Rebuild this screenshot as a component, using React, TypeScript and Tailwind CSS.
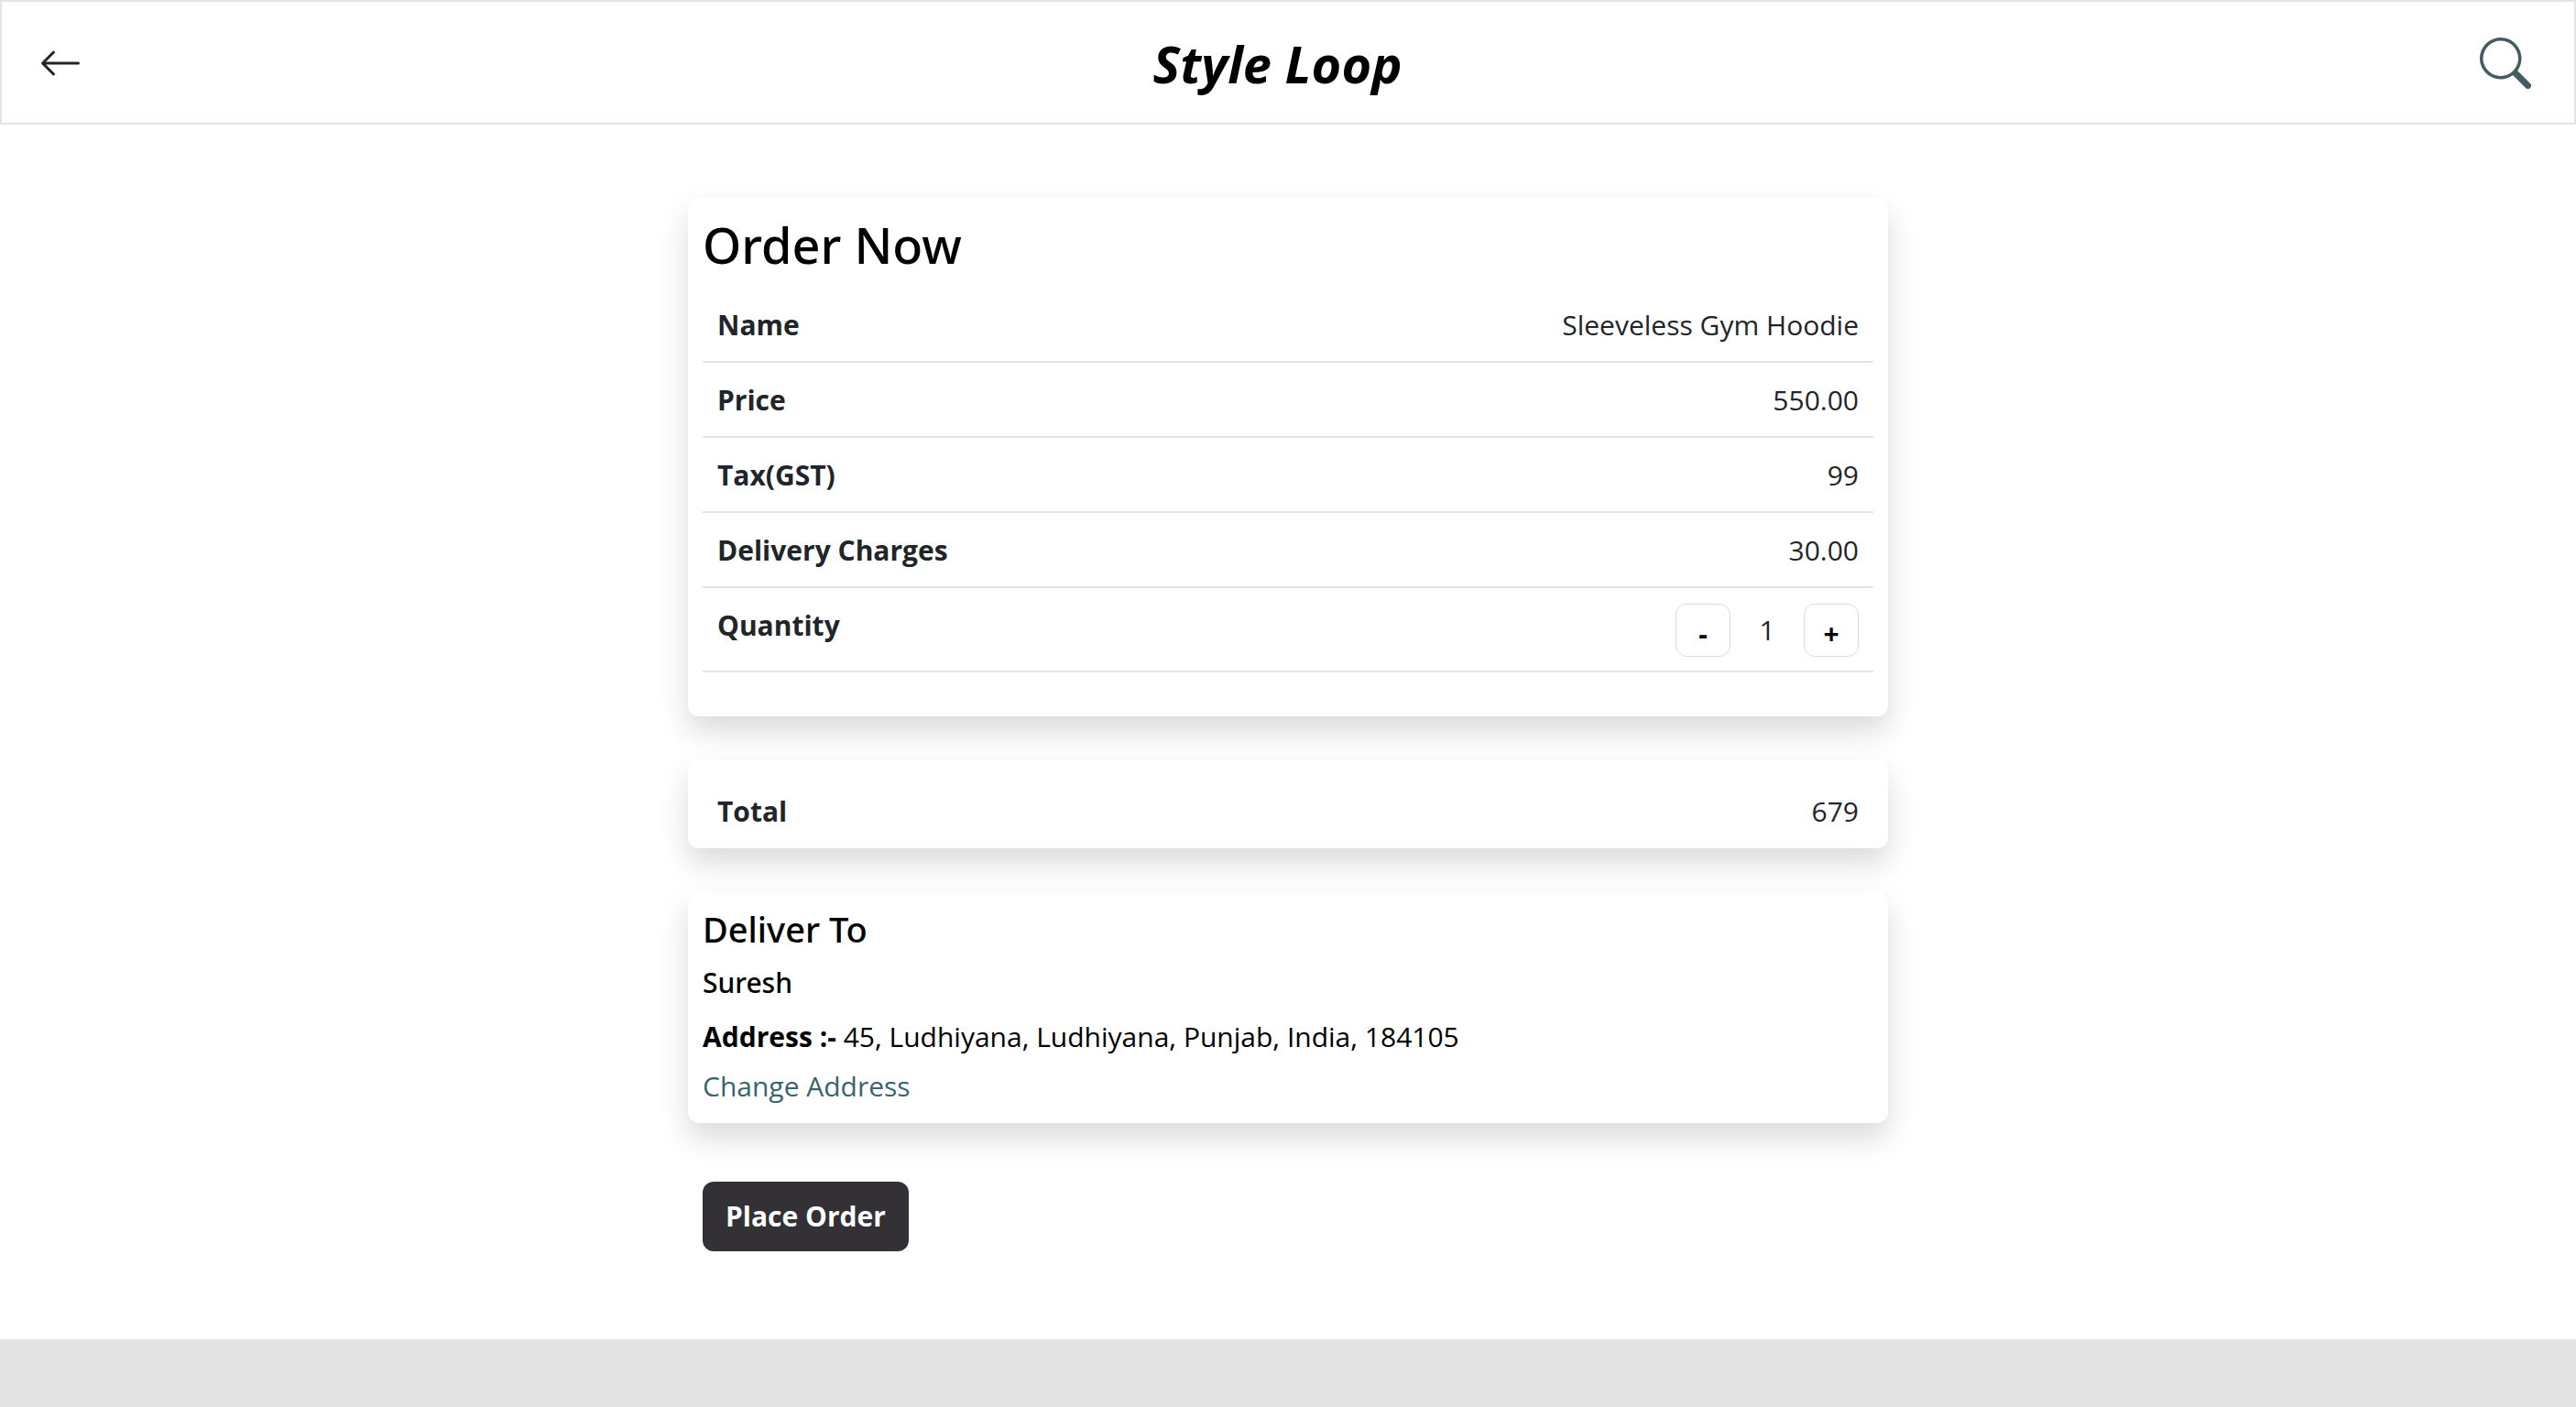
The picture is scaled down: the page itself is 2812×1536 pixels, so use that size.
import { useState, type ReactNode } from "react";
import { BsArrowLeft, BsSearch } from "react-icons/bs";

const PRICE = 550;
const TAX_RATE = 0.18;
const DELIVERY = 30;

function Card({ children }: { children: ReactNode }) {
  return (
    <section className="rounded-xl bg-white shadow-[0_16px_32px_rgba(0,0,0,0.15)]">
      {children}
    </section>
  );
}

function Row({ label, children }: { label: string; children: ReactNode }) {
  return (
    <tr className="border-b-2 border-[#e2e4e6]">
      <th scope="row" className="px-4 pt-[17px] pb-[15px] text-left align-top font-bold">
        {label}
      </th>
      <td className="px-4 pt-[17px] pb-[15px] text-right">{children}</td>
    </tr>
  );
}

function StepButton({ label, onClick, children }: { label: string; onClick: () => void; children: ReactNode }) {
  return (
    <button
      type="button"
      aria-label={label}
      onClick={onClick}
      className="flex h-[58px] w-[60px] items-center justify-center rounded-xl border border-[#d9dbde] pt-2 font-bold leading-none text-black"
    >
      {children}
    </button>
  );
}

export default function App() {
  const [quantity, setQuantity] = useState(1);
  const tax = Math.round(PRICE * TAX_RATE * quantity);
  const total = PRICE * quantity + tax + DELIVERY;

  return (
    <div className="flex min-h-screen flex-col bg-white font-['Open_Sans','Noto_Sans',sans-serif] text-[30px] leading-[48px] text-[#212529]">
      <header className="flex items-center justify-between border-2 border-[#e2e4e8] pt-[25px] pr-[47px] pb-[23px] pl-10">
        <button type="button" aria-label="Back">
          <BsArrowLeft size={48} />
        </button>
        <h1 className="text-[56px] font-bold leading-[84px] text-black italic">Style Loop</h1>
        <button type="button" aria-label="Search" className="pl-2 text-[#435c60]">
          <BsSearch size={56} />
        </button>
      </header>

      <main className="mx-auto flex w-full max-w-[1310px] flex-col gap-12 pt-20 pb-24">
        <Card>
          <div className="px-4 pt-4 pb-12">
            <h2 className="mb-3 font-['Noto_Sans',sans-serif] text-[54px] font-medium leading-[70px] text-black">
              Order Now
            </h2>
            <table className="w-full border-collapse">
              <tbody>
                <Row label="Name">Sleeveless Gym Hoodie</Row>
                <Row label="Price">{PRICE.toFixed(2)}</Row>
                <Row label="Tax(GST)">{tax}</Row>
                <Row label="Delivery Charges">{DELIVERY.toFixed(2)}</Row>
                <Row label="Quantity">
                  <div className="flex items-center justify-end">
                    <StepButton label="Decrease quantity" onClick={() => setQuantity((q) => Math.max(1, q - 1))}>
                      -
                    </StepButton>
                    <output className="w-20 text-center">{quantity}</output>
                    <StepButton label="Increase quantity" onClick={() => setQuantity((q) => q + 1)}>
                      +
                    </StepButton>
                  </div>
                </Row>
              </tbody>
            </table>
          </div>
        </Card>

        <Card>
          <dl className="flex justify-between px-8 pt-8 pb-4">
            <dt className="font-bold">Total</dt>
            <dd>{total}</dd>
          </dl>
        </Card>

        <Card>
          <div className="p-4 text-black">
            <h3 className="mb-4 font-['Noto_Sans',sans-serif] text-[38px] font-medium">Deliver To</h3>
            <p className="mb-4 font-['Noto_Sans',sans-serif] font-medium leading-[38px]">Suresh</p>
            <p className="mb-1">
              <strong className="font-bold">Address :-</strong> 45, Ludhiyana, Ludhiyana, Punjab, India, 184105
            </p>
            <a href="#address" className="block w-fit pt-[2px] text-[#3a646c]">
              Change Address
            </a>
          </div>
        </Card>

        <button
          type="button"
          className="mt-4 ml-4 self-start rounded-xl bg-[#343136] px-[25px] py-[14px] font-bold text-white"
        >
          Place Order
        </button>
      </main>

      <footer className="flex-1 bg-[#e4e4e4]" />
    </div>
  );
}
